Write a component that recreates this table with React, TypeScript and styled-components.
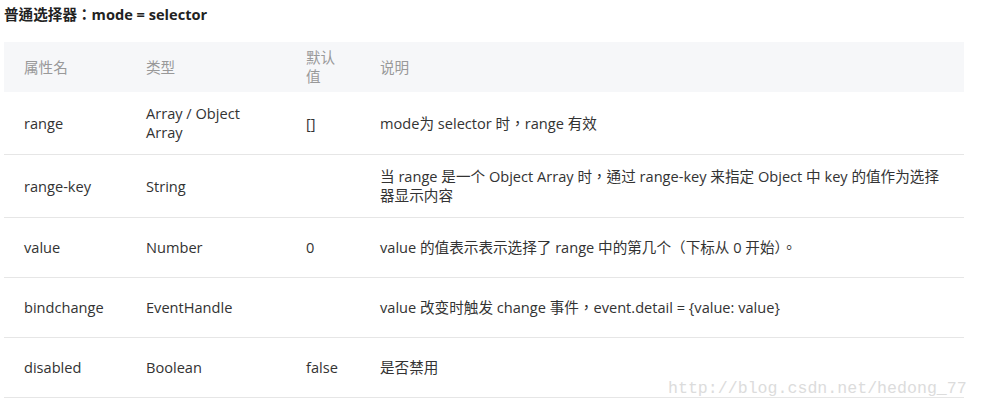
import * as React from 'react';
import styled, { createGlobalStyle } from 'styled-components';

type Row = {
  name: string;
  type: string;
  def: string;
  desc: string;
  tall?: boolean;
};

const rows: Row[] = [
  {
    name: 'range',
    type: 'Array / Object Array',
    def: '[]',
    desc: 'mode为 selector 时，range 有效',
    tall: true,
  },
  {
    name: 'range-key',
    type: 'String',
    def: '',
    desc: '当 range 是一个 Object Array 时，通过 range-key 来指定 Object 中 key 的值作为选择器显示内容',
    tall: true,
  },
  {
    name: 'value',
    type: 'Number',
    def: '0',
    desc: 'value 的值表示表示选择了 range 中的第几个（下标从 0 开始）。',
  },
  {
    name: 'bindchange',
    type: 'EventHandle',
    def: '',
    desc: 'value 改变时触发 change 事件，event.detail = {value: value}',
  },
  {
    name: 'disabled',
    type: 'Boolean',
    def: 'false',
    desc: '是否禁用',
  },
];

const App: React.FC = () => (
  <Page>
    <GlobalStyle />
    <Title>普通选择器：mode = selector</Title>
    <Table>
      <colgroup>
        <col style={{ width: 122 }} />
        <col style={{ width: 160 }} />
        <col style={{ width: 74 }} />
        <col />
      </colgroup>
      <thead>
        <HeadRow>
          <Th>属性名</Th>
          <Th>类型</Th>
          <Th>默认值</Th>
          <Th>说明</Th>
        </HeadRow>
      </thead>
      <tbody>
        {rows.map(row => (
          <BodyRow key={row.name} $tall={row.tall}>
            <Td>{row.name}</Td>
            <Td>{row.type}</Td>
            <Td>{row.def}</Td>
            <Td>{row.desc}</Td>
          </BodyRow>
        ))}
      </tbody>
    </Table>
    <Watermark>http://blog.csdn.net/hedong_77</Watermark>
  </Page>
);

export default App;

const GlobalStyle = createGlobalStyle`
  body {
    margin: 0;
    background: #fff;
    font-family: "Open Sans", "Noto Sans CJK TC", sans-serif;
    color: #333;
  }
`;

const Page = styled.div`
  position: relative;
  width: 981px;
  height: 408px;
  padding: 0 17px 0 4px;
  box-sizing: border-box;
  overflow: hidden;
`;

const Title = styled.h4`
  margin: 0;
  padding-top: 4px;
  height: 42px;
  box-sizing: border-box;
  font-size: 14.6px;
  line-height: 20px;
  font-weight: bold;
  color: #222;
`;

const Table = styled.table`
  width: 960px;
  border-collapse: collapse;
  table-layout: fixed;
  font-size: 14.6px;
  line-height: 19px;
`;

const HeadRow = styled.tr`
  height: 50px;
  background: #f6f7f9;
`;

const Th = styled.th`
  padding: 6px 20px;
  text-align: left;
  font-weight: normal;
  color: #999;
  vertical-align: middle;
`;

const BodyRow = styled.tr<{ $tall?: boolean }>`
  height: ${p => (p.$tall ? '62px' : '60px')};
  border-bottom: 1px solid #e6e6e6;
`;

const Td = styled.td`
  padding: 12px 20px;
  vertical-align: middle;
  color: #333;
`;

const Watermark = styled.div`
  position: absolute;
  left: 668px;
  top: 379px;
  font-family: "Liberation Mono", monospace;
  font-size: 16.6px;
  color: #dcdcdc;
  white-space: nowrap;
`;
